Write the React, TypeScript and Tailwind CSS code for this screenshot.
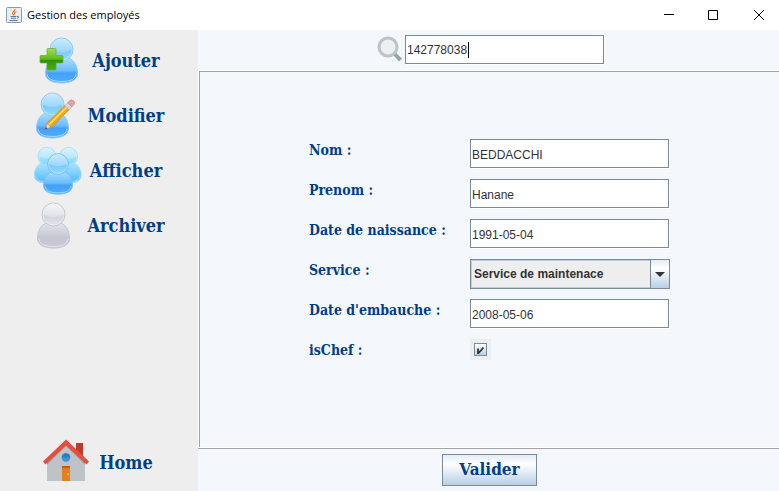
import React from "react";

const serif = "font-['DejaVu_Serif_Condensed','DejaVu_Serif',serif] font-bold text-[#003f87]";
const box =
  "h-[29px] w-[199px] border border-[#7a8a99] bg-white pt-0.5 pl-px text-xs text-[#333333] shadow-[1px_1px_0_#ffffff] outline-none";

type BustProps = { cx: number; cy: number; r: number; fill: string; edge: string };

function Bust({ cx, cy, r, fill, edge }: BustProps) {
  const k = r / 12;
  return (
    <g transform={`translate(${cx} ${cy}) scale(${k})`}>
      <path
        d="M-8 9C-13 11-16 17-16 24c0 6 6 9.500 16 9.500s16-3.500 16-9.500C16 17 13 11 8 9Z"
        fill={`url(#${fill}-body)`}
        stroke={edge}
        strokeWidth="1"
      />
      <path d="M-14.500 24c0 5 5 8 14.500 8s14.500-3 14.500-8" fill="none" stroke="#fff" strokeOpacity=".5" />
      <circle r="11.500" fill={`url(#${fill}-head)`} stroke={edge} strokeWidth="1" />
      <path d="M-10 0a10 10 0 0 1 20 0Q0 5-10 0Z" fill="#fff" fillOpacity=".28" />
      <circle r="10.500" fill="none" stroke="#fff" strokeOpacity=".5" strokeWidth=".8" />
    </g>
  );
}

function Gradients() {
  return (
    <svg width="0" height="0" className="absolute" aria-hidden="true">
      <defs>
        <linearGradient id="blue-head" x1="0" y1="0" x2="0" y2="1">
          <stop offset="0" stopColor="#b9e5ff" />
          <stop offset=".55" stopColor="#7cc8fb" />
          <stop offset="1" stopColor="#8fdcff" />
        </linearGradient>
        <linearGradient id="blue-body" x1="0" y1="0" x2="0" y2="1">
          <stop offset="0" stopColor="#a5dcff" />
          <stop offset=".5" stopColor="#6bbcfb" />
          <stop offset=".6" stopColor="#459ff8" />
          <stop offset="1" stopColor="#49b2ff" />
        </linearGradient>
        <linearGradient id="sky-head" x1="0" y1="0" x2="0" y2="1">
          <stop offset="0" stopColor="#c9f0ff" />
          <stop offset="1" stopColor="#7dd6fd" />
        </linearGradient>
        <linearGradient id="sky-body" x1="0" y1="0" x2="0" y2="1">
          <stop offset="0" stopColor="#a9e3ff" />
          <stop offset="1" stopColor="#50bafb" />
        </linearGradient>
        <linearGradient id="grey-head" x1="0" y1="0" x2="0" y2="1">
          <stop offset="0" stopColor="#f4f4f8" />
          <stop offset=".6" stopColor="#d3d5de" />
          <stop offset="1" stopColor="#e3e4ec" />
        </linearGradient>
        <linearGradient id="grey-body" x1="0" y1="0" x2="0" y2="1">
          <stop offset="0" stopColor="#e2e3ea" />
          <stop offset=".6" stopColor="#c3c5d0" />
          <stop offset="1" stopColor="#c9cbd8" />
        </linearGradient>
        <linearGradient id="plus" x1="0" y1="0" x2="0" y2="1">
          <stop offset="0" stopColor="#a4e04a" />
          <stop offset=".5" stopColor="#5fb81c" />
          <stop offset=".55" stopColor="#2f9407" />
          <stop offset="1" stopColor="#4bad12" />
        </linearGradient>
      </defs>
    </svg>
  );
}

const iconProps = { width: 48, height: 48, viewBox: "0 0 48 48", "aria-hidden": true } as const;

function AddIcon() {
  return (
    <svg {...iconProps}>
      <Bust cx={25.5} cy={12.5} r={12} fill="blue" edge="#8fcbf7" />
      <path
        d="M12 11.500h7a1 1 0 0 1 1 1V18.500h6a1 1 0 0 1 1 1v5.500a1 1 0 0 1-1 1h-6v6a1 1 0 0 1-1 1h-7a1 1 0 0 1-1-1v-6H5a1 1 0 0 1-1-1v-5.500a1 1 0 0 1 1-1h6v-6a1 1 0 0 1 1-1Z"
        fill="url(#plus)"
        stroke="#5fae2c"
        strokeWidth=".7"
      />
    </svg>
  );
}

function EditIcon() {
  return (
    <svg {...iconProps}>
      <Bust cx={20.5} cy={12.5} r={12} fill="blue" edge="#8fcbf7" />
      <g transform="translate(13 37.500) rotate(-45)">
        <path d="M0 0 6-2.800V2.800Z" fill="#f3d6a0" stroke="#b9822f" strokeWidth=".6" />
        <path d="M0 0 2.400-1.100V1.100Z" fill="#5a4630" />
        <path d="M6-3H31V3H6Z" fill="#f2a51d" stroke="#c98618" strokeWidth=".6" />
        <path d="M6-1.500H31V.500H6Z" fill="#ffd65c" />
        <path d="M31-3H35V3H31Z" fill="#d5d8dc" stroke="#9b9fa5" strokeWidth=".5" />
        <path d="M35-3h2.500a3 3 0 0 1 0 6H35Z" fill="#f29aa4" stroke="#cf7d88" strokeWidth=".5" />
      </g>
    </svg>
  );
}

function GroupIcon() {
  return (
    <svg {...iconProps}>
      <Bust cx={13} cy={9.500} r={9.500} fill="sky" edge="#9ddaf9" />
      <Bust cx={34.500} cy={9.500} r={9.500} fill="sky" edge="#9ddaf9" />
      <Bust cx={24} cy={17} r={10.800} fill="blue" edge="#6fbdf5" />
    </svg>
  );
}

function ArchiveIcon() {
  return (
    <svg {...iconProps}>
      <Bust cx={22.5} cy={12.5} r={12} fill="grey" edge="#c3c5d0" />
    </svg>
  );
}

function HomeIcon() {
  return (
    <svg {...iconProps}>
      <path d="M33 4h7v17h-7Z" fill="#c0392b" />
      <path d="M4 22 23 4l19 18v20H4Z" fill="#bdc3c7" />
      <path d="M4 26 23 7l19 19v-4L23 3 4 22Z" fill="#95a5a6" />
      <path d="M23 .500 0 22.500l2.500 3L23 6.500l20.500 19 2.500-3Z" fill="#e74c3c" />
      <circle cx="23" cy="18.500" r="4.300" fill="#3498db" />
      <path d="M18.700 18.500a4.300 4.300 0 0 1 8.600 0Z" fill="#2980b9" />
      <path d="M19 27h8v15h-8Z" fill="#e67e22" />
      <path d="M19 27h8v2h-8Z" fill="#d35400" />
      <path d="M24 34.500h2v1.500h-2Z" fill="#f1c40f" />
    </svg>
  );
}

function JavaIcon() {
  return (
    <svg width="16" height="16" viewBox="0 0 16 16" fill="none" aria-hidden="true">
      <rect x=".5" y=".5" width="15" height="15" rx="1" fill="#e9eef3" stroke="#8799aa" />
      <path d="M9 2C9.500 4 6 4.500 6.500 6.500 6.700 7.500 8 8 8 8.500M10.500 4.500C8.500 5 8 6 9 7.500" stroke="#e8792b" strokeWidth="1.200" />
      <path d="M4.500 9.500h6M5 11.300h5M3.500 13.500h8M11 9.500c2-.8 2.500 1 .2 1.800" stroke="#5b7d9b" />
    </svg>
  );
}

function SearchIcon() {
  return (
    <svg width="26" height="26" viewBox="0 0 26 26" aria-hidden="true">
      <path d="m16.500 19.500 2.500-2.500 6 5.500-3 3Z" fill="#95a5a6" />
      <path d="m15.500 17 2-2 2.500 2.500-2.500 2.500Z" fill="#95a5a6" />
      <circle cx="11" cy="11" r="9" fill="#ecf0f1" stroke="#bdc3c7" strokeWidth="3" />
    </svg>
  );
}

function NavItem({ icon, label }: { icon: React.ReactNode; label: string }) {
  return (
    <button type="button" className={`flex h-[55px] w-full items-center justify-center gap-2 text-lg ${serif}`}>
      {icon}
      {label}
    </button>
  );
}

function Row({ id, label, children }: { id: string; label: string; children: React.ReactNode }) {
  return (
    <div className="flex h-10">
      <label htmlFor={id} className={`w-[161px] shrink-0 text-sm leading-[22px] whitespace-nowrap ${serif}`}>
        {label}
      </label>
      <div className="w-[200px]">{children}</div>
    </div>
  );
}

export default function App() {
  return (
    <div className="flex min-h-screen flex-col bg-[#f4f7fc] font-['Liberation_Sans',Arial,sans-serif]">
      <Gradients />
      <header className="flex h-[30px] items-center bg-white pl-1.5">
        <JavaIcon />
        <h1 className="ml-[5px] flex-1 font-['Open_Sans','Noto_Sans',sans-serif] text-[11px] text-black">Gestion des employés</h1>
        <button type="button" aria-label="Réduire" className="flex h-full w-[45px] items-center justify-center pl-1">
          <svg width="10" height="10" stroke="#000"><path d="M0 4.500h10" /></svg>
        </button>
        <button type="button" aria-label="Agrandir" className="flex h-full w-[45px] items-center justify-center pl-0.5">
          <svg width="10" height="10" fill="none" stroke="#000"><path d="M.500.500h9v9h-9Z" /></svg>
        </button>
        <button type="button" aria-label="Fermer" className="flex h-full w-[45px] items-center justify-center pl-1">
          <svg width="10" height="10" stroke="#000"><path d="m0 0 10 10M10 0 0 10" /></svg>
        </button>
      </header>

      <div className="flex flex-1">
        <nav className="flex w-[198px] shrink-0 flex-col bg-[#eeeeee] pt-[3px] pr-0.5 pb-px">
          <NavItem icon={<AddIcon />} label="Ajouter" />
          <NavItem icon={<EditIcon />} label="Modifier" />
          <NavItem icon={<GroupIcon />} label="Afficher" />
          <NavItem icon={<ArchiveIcon />} label="Archiver" />
          <div className="mt-auto">
            <NavItem icon={<HomeIcon />} label="Home" />
          </div>
        </nav>

        <form className="flex min-w-0 flex-1 flex-col" onSubmit={(e) => e.preventDefault()}>
          <div className="flex h-10 items-center justify-center gap-0.5 pb-0.5 pl-1">
            <SearchIcon />
            <div className="relative flex">
              <input aria-label="Rechercher" defaultValue="142778038" className={box} />
              <span className="absolute top-[7px] left-[63px] h-4 w-px bg-black" />
            </div>
          </div>

          <div className="flex flex-1 border-t border-l border-white">
            <div className="flex flex-1 justify-center border-t border-l border-[#a3a3a3] pt-[67px]">
              <div>
                <Row id="nom" label="Nom :">
                  <input id="nom" defaultValue="BEDDACCHI" className={box} />
                </Row>
                <Row id="prenom" label="Prenom :">
                  <input id="prenom" defaultValue="Hanane" className={box} />
                </Row>
                <Row id="naissance" label="Date de naissance :">
                  <input id="naissance" defaultValue="1991-05-04" className={box} />
                </Row>
                <Row id="service" label="Service :">
                  <div className="relative h-[30px] border border-[#7a8a99]">
                    <select
                      id="service"
                      className="h-full w-full appearance-none border border-[#b8cfe5] bg-[#eeeeee] pl-0.5 text-xs font-bold text-[#333333] outline-none"
                    >
                      <option>Service de maintenace</option>
                    </select>
                    <span className="pointer-events-none absolute inset-y-0 right-0 flex w-[19px] items-center justify-center border-l border-[#7a8a99] bg-linear-to-b from-[#e3ecf5] via-white via-30% to-[#b8cfe5]">
                      <svg width="10" height="5" fill="#333"><path d="M0 0h10L5 5Z" /></svg>
                    </span>
                  </div>
                </Row>
                <Row id="embauche" label="Date d'embauche :">
                  <input id="embauche" defaultValue="2008-05-06" className={box} />
                </Row>
                <Row id="chef" label="isChef :">
                  <div className="relative flex size-[21px] items-center justify-center bg-[#eeeeee]">
                    <input
                      id="chef"
                      type="checkbox"
                      defaultChecked
                      className="peer size-[13px] appearance-none border border-[#7a8a99] bg-linear-to-b from-white to-[#b8cfe5]"
                    />
                    <svg
                      width="7"
                      height="8"
                      viewBox="0 0 7 8"
                      className="pointer-events-none absolute hidden peer-checked:block"
                      fill="none"
                      stroke="#333"
                      strokeWidth="1.800"
                    >
                      <path d="M1 2.500v4.500h.5L6.500 1.500" />
                    </svg>
                  </div>
                </Row>
              </div>
            </div>
          </div>

          <div className="border-t border-white">
            <div className="flex h-[43px] items-center justify-center border-t border-[#a3a3a3] pl-0.5">
              <button
                type="submit"
                className={`h-8 border border-[#7a8a99] bg-linear-to-b from-[#e3ecf5] via-white via-30% to-[#b8cfe5] px-4 text-[17px] ${serif}`}
              >
                Valider
              </button>
            </div>
          </div>
        </form>
      </div>
    </div>
  );
}
